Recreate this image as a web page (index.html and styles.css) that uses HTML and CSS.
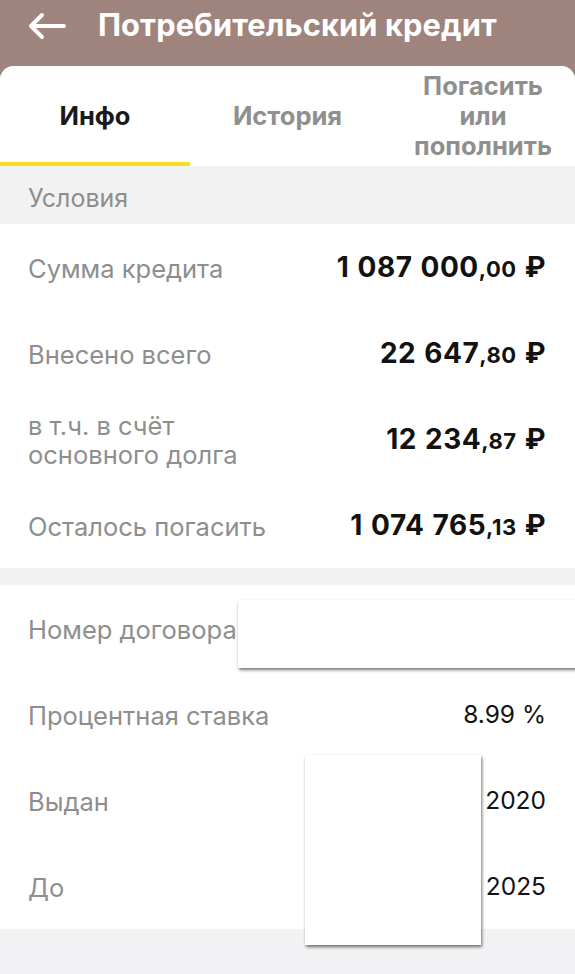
FILE: index.html
```html
<!DOCTYPE html>
<html lang="ru">
<head>
<meta charset="utf-8">
<link rel="stylesheet" href="styles.css">
</head>
<body>
<div class="screen">
  <header class="header">
    <svg class="back" viewBox="0 0 40 28" width="40" height="28">
      <path d="M37 14H4M15 3L4 14l11 11" fill="none" stroke="#fff" stroke-width="4" stroke-linecap="round" stroke-linejoin="round"/>
    </svg>
    <h1 class="title">Потребительский кредит</h1>
  </header>
  <main class="card">
    <nav class="tabs">
      <div class="tab active">Инфо</div>
      <div class="tab">История</div>
      <div class="tab">Погасить<br>или<br>пополнить</div>
    </nav>
    <div class="section-title">Условия</div>
    <section class="group">
      <div class="row"><span class="label">Сумма кредита</span><span class="value">1 087 000<small>,00</small> ₽</span></div>
      <div class="row"><span class="label">Внесено всего</span><span class="value">22 647<small>,80</small> ₽</span></div>
      <div class="row"><span class="label">в т.ч. в счёт<br>основного долга</span><span class="value">12 234<small>,87</small> ₽</span></div>
      <div class="row"><span class="label">Осталось погасить</span><span class="value">1 074 765<small>,13</small> ₽</span></div>
    </section>
    <div class="spacer"></div>
    <section class="group">
      <div class="row"><span class="label">Номер договора</span><span class="plain"></span></div>
      <div class="row"><span class="label">Процентная ставка</span><span class="plain">8.99 %</span></div>
      <div class="row"><span class="label">Выдан</span><span class="plain">2020</span></div>
      <div class="row"><span class="label">До</span><span class="plain">2025</span></div>
    </section>
    <div class="bottom"></div>
  </main>
  <div class="redact redact-1"></div>
  <div class="redact redact-2"></div>
</div>
</body>
</html>
```
FILE: styles.css
```css
* { box-sizing: border-box; }
html, body { margin: 0; padding: 0; }
body {
  font-family: Inter, "Noto Sans", "Liberation Sans", sans-serif;
  background: #f2f2f4;
  width: 575px;
  height: 974px;
  overflow: hidden;
}
.screen {
  position: relative;
  background: linear-gradient(#9f847d, #a3867f);
  min-height: 974px;
}
.header {
  height: 66px;
  display: flex;
  align-items: flex-start;
  padding: 11px 0 0 27px;
  gap: 31px;
}
.back { display: block; margin-top: 1px; }
.title {
  margin: 0;
  color: #fff;
  font-size: 30.8px;
  font-weight: 700;
  line-height: 28px;
  letter-spacing: 0.1px;
}
.card {
  background: #f2f2f4;
  border-radius: 14px 14px 0 0;
  overflow: hidden;
  display: flex;
  flex-direction: column;
}
.tabs {
  background: #fff;
  height: 100px;
  display: grid;
  grid-template-columns: 190px 195px 190px;
}
.tab {
  display: flex;
  align-items: center;
  justify-content: center;
  text-align: center;
  font-size: 25.5px;
  font-weight: 700;
  line-height: 30px;
  color: #8f8f8f;
}
.tab:last-child { padding-left: 6px; }
.tab.active {
  color: #1a1a1a;
  box-shadow: inset 0 -4px 0 #f7dc20;
}
.section-title {
  height: 58px;
  display: flex;
  align-items: center;
  padding: 5px 28px 0;
  font-size: 25px;
  color: #8e8e8e;
  background: #f2f2f2;
}
.group {
  background: #fff;
  display: flex;
  flex-direction: column;
}
.row {
  height: 86px;
  display: flex;
  align-items: center;
  justify-content: space-between;
  padding: 0 29px 0 28px;
}
.label {
  font-size: 25.5px;
  line-height: 29px;
  color: #8e8e8e;
  padding-top: 2px;
}
.value {
  font-size: 28px;
  font-weight: 700;
  color: #121212;
  letter-spacing: 0.5px;
  word-spacing: 1px;
}
.value small {
  font-size: 22px;
  font-weight: 700;
}
.plain {
  font-size: 24.5px;
  color: #121212;
}
.spacer { height: 17px; background: #f2f2f4; }
.bottom { height: 60px; background: #f2f2f4; }
.redact {
  position: absolute;
  background: #fff;
  box-shadow: 1px 2px 3px rgba(0,0,0,0.55);
}
.redact-1 { left: 238px; top: 600px; width: 345px; height: 68px; }
.redact-2 { left: 305px; top: 755px; width: 176px; height: 190px; }
```
